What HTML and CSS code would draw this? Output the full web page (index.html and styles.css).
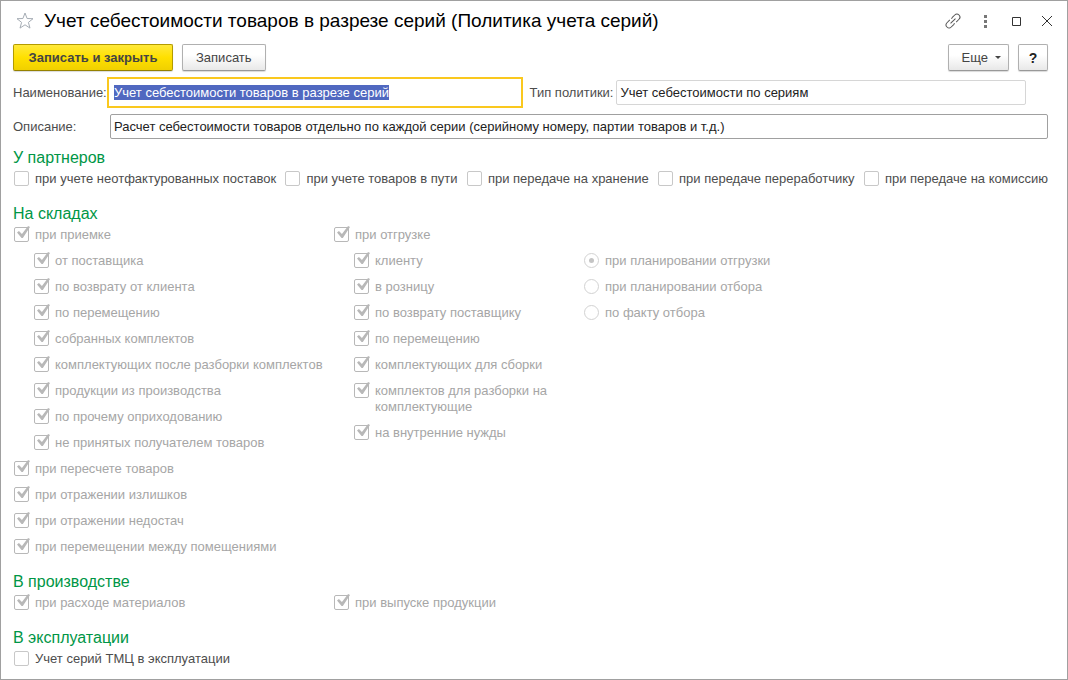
FILE: index.html
```
<!DOCTYPE html>
<html lang="ru">
  <head>
    <meta charset="UTF-8" />
    <meta name="viewport" content="width=device-width, initial-scale=1.0" />
    <title>Политика учета серий</title>
    <link rel="stylesheet" href="styles.css">
  </head>
  <body>
    <div class="window">
      <header class="titlebar">
        <button class="icon-button" aria-label="Добавить в избранное">
          <svg class="icon icon--star" viewBox="0 0 18 18" fill="none">
            <path d="M9 1l2.100 5.500 5.900.2-4.600 3.700 1.600 5.700L9 12.800l-5 3.300 1.600-5.700L1 6.700l5.900-.2z" />
          </svg>
        </button>
        <h1 class="titlebar__heading">Учет себестоимости товаров в разрезе серий (Политика учета серий)</h1>
        <div class="titlebar__tools">
          <button class="icon-button" aria-label="Получить ссылку">
            <svg class="icon" viewBox="0 0 18 18" fill="none">
              <g transform="rotate(-45 8 9)">
                <path d="M6.500 6H2.500a3 3 0 0 0 0 6h3.500a3 3 0 0 0 1.500-.5" />
                <path d="M9.500 12h4a3 3 0 0 0 0-6h-3.500a3 3 0 0 0-1.500.5" />
                <path d="M4.500 9h7" />
              </g>
            </svg>
          </button>
          <button class="icon-button" aria-label="Меню">
            <svg class="icon icon--solid" viewBox="0 0 18 18">
              <path d="M8 3h3v3H8zM8 8h3v3H8zM8 13h3v3H8z" />
            </svg>
          </button>
          <button class="icon-button" aria-label="Развернуть">
            <svg class="icon icon--dark" viewBox="0 0 18 18" fill="none">
              <path d="M5.500 5.500h8v8h-8z" />
            </svg>
          </button>
          <button class="icon-button" aria-label="Закрыть">
            <svg class="icon icon--dark" viewBox="0 0 18 18" fill="none">
              <path d="M4 4l10 10M14 4l-10 10" />
            </svg>
          </button>
        </div>
      </header>

      <div class="toolbar">
        <button class="button button--primary">Записать и закрыть</button>
        <button class="button">Записать</button>
        <button class="button button--menu">Еще</button>
        <button class="button button--help">?</button>
      </div>

      <form class="form">
        <div class="row row--short">
          <label class="row__label row__label--main" for="name">Наименование:</label>
          <input class="text-box" id="name" type="text" value="Учет себестоимости товаров в разрезе серий" />
          <label class="row__label" for="policy">Тип политики:</label>
          <input class="text-box text-box--readonly" id="policy" type="text" value="Учет себестоимости по сериям" readonly />
        </div>
        <div class="row">
          <label class="row__label row__label--main" for="description">Описание:</label>
          <input class="text-box" id="description" type="text" value="Расчет себестоимости товаров отдельно по каждой серии (серийному номеру, партии товаров и т.д.)" />
        </div>

        <section class="section">
          <h2 class="section__heading">У партнеров</h2>
          <div class="line">
            <label class="option"><input class="check" type="checkbox" />при учете неотфактурованных поставок</label>
            <label class="option"><input class="check" type="checkbox" />при учете товаров в пути</label>
            <label class="option"><input class="check" type="checkbox" />при передаче на хранение</label>
            <label class="option"><input class="check" type="checkbox" />при передаче переработчику</label>
            <label class="option"><input class="check" type="checkbox" />при передаче на комиссию</label>
          </div>
        </section>

        <section class="section">
          <h2 class="section__heading">На складах</h2>
          <div class="columns">
            <div class="list">
              <label class="option option--disabled"><input class="check" type="checkbox" checked disabled />при приемке</label>
              <div class="list list--nested">
                <label class="option option--disabled"><input class="check" type="checkbox" checked disabled />от поставщика</label>
                <label class="option option--disabled"><input class="check" type="checkbox" checked disabled />по возврату от клиента</label>
                <label class="option option--disabled"><input class="check" type="checkbox" checked disabled />по перемещению</label>
                <label class="option option--disabled"><input class="check" type="checkbox" checked disabled />собранных комплектов</label>
                <label class="option option--disabled"><input class="check" type="checkbox" checked disabled />комплектующих после разборки комплектов</label>
                <label class="option option--disabled"><input class="check" type="checkbox" checked disabled />продукции из производства</label>
                <label class="option option--disabled"><input class="check" type="checkbox" checked disabled />по прочему оприходованию</label>
                <label class="option option--disabled"><input class="check" type="checkbox" checked disabled />не принятых получателем товаров</label>
              </div>
              <label class="option option--disabled"><input class="check" type="checkbox" checked disabled />при пересчете товаров</label>
              <label class="option option--disabled"><input class="check" type="checkbox" checked disabled />при отражении излишков</label>
              <label class="option option--disabled"><input class="check" type="checkbox" checked disabled />при отражении недостач</label>
              <label class="option option--disabled"><input class="check" type="checkbox" checked disabled />при перемещении между помещениями</label>
            </div>
            <div class="list">
              <label class="option option--disabled"><input class="check" type="checkbox" checked disabled />при отгрузке</label>
              <div class="list list--nested">
                <label class="option option--disabled"><input class="check" type="checkbox" checked disabled />клиенту</label>
                <label class="option option--disabled"><input class="check" type="checkbox" checked disabled />в розницу</label>
                <label class="option option--disabled"><input class="check" type="checkbox" checked disabled />по возврату поставщику</label>
                <label class="option option--disabled"><input class="check" type="checkbox" checked disabled />по перемещению</label>
                <label class="option option--disabled"><input class="check" type="checkbox" checked disabled />комплектующих для сборки</label>
                <label class="option option--disabled"><input class="check" type="checkbox" checked disabled />комплектов для разборки на комплектующие</label>
                <label class="option option--disabled"><input class="check" type="checkbox" checked disabled />на внутренние нужды</label>
              </div>
            </div>
            <div class="list list--second-line">
              <label class="option option--disabled"><input class="check check--radio" type="radio" name="moment" checked disabled />при планировании отгрузки</label>
              <label class="option option--disabled"><input class="check check--radio" type="radio" name="moment" disabled />при планировании отбора</label>
              <label class="option option--disabled"><input class="check check--radio" type="radio" name="moment" disabled />по факту отбора</label>
            </div>
          </div>
        </section>

        <section class="section">
          <h2 class="section__heading">В производстве</h2>
          <div class="columns">
            <label class="option option--disabled"><input class="check" type="checkbox" checked disabled />при расходе материалов</label>
            <label class="option option--disabled"><input class="check" type="checkbox" checked disabled />при выпуске продукции</label>
          </div>
        </section>

        <section class="section">
          <h2 class="section__heading">В эксплуатации</h2>
          <label class="option"><input class="check" type="checkbox" />Учет серий ТМЦ в эксплуатации</label>
        </section>
      </form>
    </div>

    <script>
      const nameBox = document.querySelector("#name");
      nameBox.focus();
      nameBox.select();
    </script>
  </body>
</html>
```
FILE: styles.css
```
* {
  margin: 0;
  padding: 0;
  box-sizing: border-box;
}
body {
  font-family: "Liberation Sans", Arial, sans-serif;
  font-size: 13px;
  line-height: 16px;
  color: #4d4d4d;
  background-color: #fff;
}
button,
input {
  font: inherit;
}
.window {
  min-height: 100vh;
  border: 1px solid #a0a0a0;
  padding: 8px 19px 8px 12px;
}

/* title */
.titlebar {
  display: flex;
  align-items: center;
  gap: 7px;
  height: 24px;
}
.titlebar__heading {
  flex: 1;
  font-size: 19px;
  font-weight: 400;
  line-height: 24px;
  color: #000;
}
.titlebar__tools {
  display: flex;
  gap: 7px;
  margin-right: -11px;
}
.icon-button {
  display: grid;
  place-items: center;
  width: 24px;
  height: 24px;
  border: none;
  background: none;
  cursor: pointer;
}
.icon {
  width: 18px;
  height: 18px;
  stroke: #555;
}
.icon--star {
  stroke: #a6adb5;
}
.icon--solid {
  fill: #777;
  stroke: none;
}
.icon--dark {
  stroke: #333;
}

/* buttons */
.toolbar {
  display: flex;
  gap: 9px;
  margin-top: 11px;
}
.button {
  height: 27px;
  padding: 0 13px;
  border: 1px solid #b0b0b0;
  border-bottom-color: #999;
  border-radius: 2px;
  color: #444;
  background: linear-gradient(#fff 40%, #e8e8e8);
  box-shadow: 0 1px 1px rgba(0, 0, 0, 0.15);
  cursor: pointer;
}
.button--primary {
  min-width: 160px;
  font-weight: 700;
  border-color: #b39b00;
  border-bottom-color: #958100;
  background: linear-gradient(#ffe93b, #ffe000 50%, #f0d000);
}
.button--menu {
  display: flex;
  align-items: center;
  gap: 7px;
  margin-left: auto;
  padding-right: 7px;
}
.button--menu::after {
  content: "";
  border: 3px solid transparent;
  border-top-color: #444;
  border-bottom: none;
}
.button--help {
  width: 30px;
  padding: 0;
  font-size: 14px;
  font-weight: 700;
  color: #222;
}

/* fields */
.row {
  display: flex;
  align-items: center;
  margin-top: 9px;
}
.row--short {
  padding-right: 22px;
}
.row__label {
  flex: none;
  margin-right: 3px;
}
.row__label--main {
  width: 97px;
  margin-right: 0;
}
.text-box {
  flex: 1;
  min-width: 0;
  height: 25px;
  padding: 0 3px;
  border: 1px solid #a0a0a0;
  border-radius: 2px;
  color: #222;
  background-color: #fff;
}
.text-box + .row__label {
  margin-left: 10px;
}
.text-box--readonly {
  border-color: #d6d6d6;
}
.text-box:focus {
  border-color: transparent;
  outline: 2px solid #fac81e;
  outline-offset: 1px;
  border-radius: 0;
}
.text-box::selection {
  color: #fff;
  background-color: #5068c0;
}

/* option groups */
.section {
  margin-top: 17px;
}
.row + .section {
  margin-top: 9px;
}
.section__heading {
  margin-bottom: 3px;
  font-size: 16px;
  font-weight: 400;
  line-height: 20px;
  color: #009646;
}
.line {
  display: flex;
  flex-wrap: wrap;
  justify-content: space-between;
  gap: 8px;
}
.columns {
  display: grid;
  grid-template-columns: 320px 250px 1fr;
}
.list {
  display: flex;
  flex-direction: column;
  gap: 10px;
}
.list--nested {
  padding-left: 20px;
}
.list--second-line {
  padding-top: 26px;
}
.option {
  display: flex;
  align-items: flex-start;
  gap: 6px;
}
.option--disabled {
  color: #a6a6a6;
}
.check {
  appearance: none;
  flex: none;
  position: relative;
  width: 15px;
  height: 15px;
  margin-left: 1px;
  border: 1px solid #c8c8c8;
  border-radius: 2px;
  background-color: #fff;
}
.check:checked {
  border-color: #b8b8b8;
}
.check:checked::before {
  content: "";
  position: absolute;
  top: -2px;
  left: 2px;
  width: 13px;
  height: 12px;
  background-color: #b8b8b8;
  clip-path: polygon(0 54%, 15% 42%, 38% 66%, 85% 0, 100% 8%, 45% 100%, 35% 100%);
}
.check--radio,
.check--radio:checked {
  border-color: #d2d2d2;
  border-radius: 50%;
}
.check--radio:checked::before {
  top: 4px;
  left: 4px;
  width: 5px;
  height: 5px;
  border-radius: 50%;
  background-color: #c4c4c4;
  clip-path: none;
}
```
